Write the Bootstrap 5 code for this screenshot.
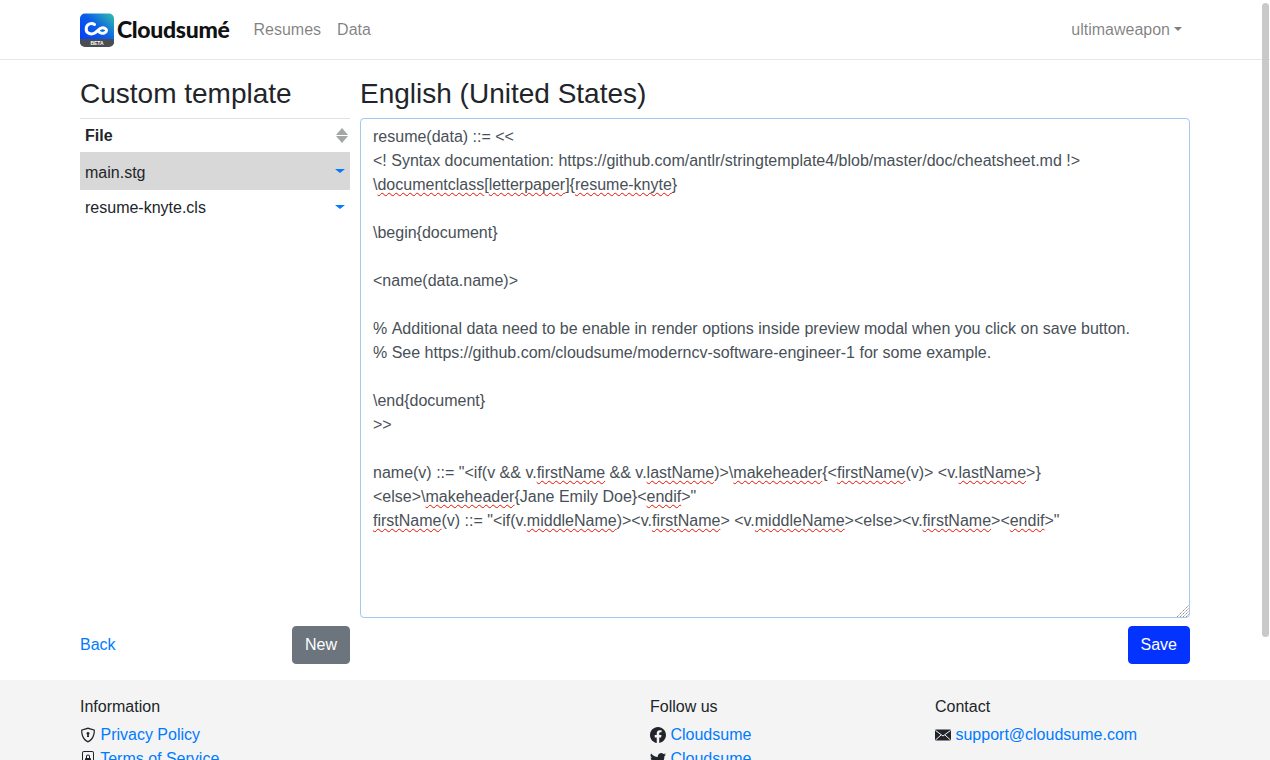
<!DOCTYPE html>
<html lang="en">
<head>
<meta charset="utf-8">
<title>Custom template</title>
<link rel="stylesheet" href="https://cdn.jsdelivr.net/npm/bootstrap@5.3.0/dist/css/bootstrap.min.css">
<style>
html,body{height:760px;overflow:hidden;}
body{font-family:"Liberation Sans",Arial,sans-serif;font-size:16px;color:#212529;background:#fff;}
a{color:#007bff;text-decoration:none;}
.wrap-box{width:1110px;margin:0 auto;}
.top-bar{height:60px;border-bottom:1px solid #e7e7e7;}
.brand-box{gap:3px;margin-right:16px;color:#111;}
.brand-word{font-family:Lato,sans-serif;font-weight:900;font-size:23px;letter-spacing:-.32px;line-height:1;}
.top-link{color:rgba(0,0,0,.5);padding:8px;}
.top-caret{display:inline-block;margin-left:4px;vertical-align:4px;border-top:4.8px solid;border-left:4.8px solid transparent;border-right:4.8px solid transparent;}
.side-col{width:270px;flex:none;}
.main-col{width:830px;flex:none;}
.col-gap{gap:10px;}
.page-title{font-size:28px;font-weight:500;line-height:33.6px;margin:17px 0 7px;color:#212529;}
.file-head{height:34px;border-top:1px solid #dee2e6;padding:0 2px 0 5px;font-weight:700;}
.file-head>span:first-child{padding-top:2px;}
.file-row{padding:0 5px;color:#212529;}
.row-one{height:38px;background:#d8d8d8;}
.row-one>span:first-child{padding-top:4px;}
.row-two>span:first-child{padding-top:2px;}
.row-two{height:34px;}
.row-caret{border-top:4px solid #007bff;border-left:5px solid transparent;border-right:5px solid transparent;}
.sort-up{width:0;border-bottom:7.5px solid #a3a5a7;border-left:6px solid transparent;border-right:6px solid transparent;margin-bottom:1px;}
.sort-down{width:0;border-top:7.5px solid #a3a5a7;border-left:6px solid transparent;border-right:6px solid transparent;}
.code-box{height:500px;border:1px solid #a3c9ef;border-radius:4px;padding:6px 12px;color:#495057;line-height:24px;white-space:pre;position:relative;background:#fff;}
.no-kern{font-kerning:none;}
.sp{text-decoration:underline wavy #e51400;text-decoration-thickness:1px;text-underline-offset:2px;text-decoration-skip-ink:none;}
.grip{position:absolute;right:0;bottom:0;width:13px;height:13px;}
.action-row{margin-top:8px;height:38px;}
.act-btn{height:38px;padding:6px 12px;line-height:24px;border-radius:4px;border:1px solid;color:#fff;font-size:16px;}
.btn-new{background:#6c757d;border-color:#6c757d;}
.btn-save{background:#0433ff;border-color:#0433ff;}
.foot-band{margin-top:16px;background:#f4f4f4;height:300px;padding-top:17px;}
.foot-grid{display:grid;grid-template-columns:570px 285px 255px;}
.foot-head{line-height:20px;margin-bottom:6px;}
.foot-line{line-height:24px;white-space:nowrap;}
.foot-line svg{width:16px;height:16px;vertical-align:-3px;color:#212529;}
.fake-thumb{position:fixed;right:1px;top:3px;width:7px;height:634px;border-radius:4px;background:#c9c9c9;}
</style>
</head>
<body>
<nav class="top-bar">
  <div class="wrap-box h-100 d-flex align-items-center">
    <a href="#" class="brand-box d-flex align-items-center">
      <svg width="34" height="34" viewBox="0 0 34 34">
        <defs><linearGradient id="lg" x1="0" y1="1" x2="1" y2="0"><stop offset="0" stop-color="#0433ff"/><stop offset=".55" stop-color="#0a5ee8"/><stop offset="1" stop-color="#35c0a8"/></linearGradient></defs>
        <rect width="34" height="33" y=".5" rx="5" fill="url(#lg)"/>
        <path d="M0 26h34v3a5 5 0 0 1-5 5H5a5 5 0 0 1-5-5z" fill="#4a4d52"/>
        <text x="17" y="32.3" font-size="5" font-weight="700" fill="#fff" text-anchor="middle" font-family="Liberation Sans">BETA</text>
        <path d="M14.5 11.500C12 9.500 6.500 10.300 6.200 15.500c-.3 5 5 6.500 8.500 4.500 2.500-1.500 4.500-5 7.500-5.200 2-.2 4.500 1 4.300 2.800-.2 2-3 3-5.200 2.500-1.300-.3-2.200-1-3-1.800" fill="none" stroke="#fff" stroke-width="3" stroke-linecap="round"/>
      </svg>
      <span class="brand-word">Cloudsumé</span>
    </a>
    <a href="#" class="top-link">Resumes</a>
    <a href="#" class="top-link">Data</a>
    <a href="#" class="top-link ms-auto">ultimaweapon<span class="top-caret"></span></a>
  </div>
</nav>
<main class="wrap-box d-flex col-gap">
  <div class="side-col">
    <h3 class="page-title">Custom template</h3>
    <div class="file-head d-flex align-items-center justify-content-between"><span>File</span><span class="d-flex flex-column"><span class="sort-up"></span><span class="sort-down"></span></span></div>
    <div class="file-row row-one d-flex align-items-center justify-content-between"><span>main.stg</span><span class="row-caret"></span></div>
    <div class="file-row row-two d-flex align-items-center justify-content-between"><span>resume-knyte.cls</span><span class="row-caret"></span></div>
  </div>
  <div class="main-col">
    <h3 class="page-title">English (United States)</h3>
    <div class="code-box">resume(data) ::= &lt;&lt;
&lt;! Syntax documentation: https://github.com/antlr/stringtemplate4/blob/master/doc/cheatsheet.md !&gt;
\<span class="sp">documentclass</span>[<span class="sp">letterpaper</span>]{<span class="sp">resume-knyte</span>}

\begin{document}

&lt;name(data.name)&gt;

<span class="no-kern">% Additional data need to be enable in render options inside preview modal when you click on save button.</span>
% See https://github.com/cloudsume/moderncv-software-engineer-1 for some example.

\end{document}
&gt;&gt;

name(v) ::= "&lt;if(v &amp;&amp; v.<span class="sp">firstName</span> &amp;&amp; v.<span class="sp">lastName</span>)&gt;\<span class="sp">makeheader</span>{&lt;<span class="sp">firstName</span>(v)&gt; &lt;v.<span class="sp">lastName</span>&gt;}
&lt;else&gt;\<span class="sp">makeheader</span>{Jane Emily Doe}&lt;<span class="sp">endif</span>&gt;"
<span class="sp">firstName</span>(v) ::= "&lt;if(v.<span class="sp">middleName</span>)&gt;&lt;v.<span class="sp">firstName</span>&gt; &lt;v.<span class="sp">middleName</span>&gt;&lt;else&gt;&lt;v.<span class="sp">firstName</span>&gt;&lt;<span class="sp">endif</span>&gt;"<svg class="grip" viewBox="0 0 13 13"><path d="M1 13L13 1M4 13L13 4M7 13L13 7M10 13L13 10" stroke="#8a8a8a" stroke-width="1" stroke-dasharray="1.400 .7" fill="none"/></svg></div>
  </div>
</main>
<div class="wrap-box d-flex col-gap action-row">
  <div class="side-col d-flex justify-content-between align-items-center">
    <a href="#">Back</a>
    <button type="button" class="act-btn btn-new">New</button>
  </div>
  <div class="main-col d-flex justify-content-end">
    <button type="button" class="act-btn btn-save">Save</button>
  </div>
</div>
<footer class="foot-band">
  <div class="wrap-box foot-grid">
    <div>
      <div class="foot-head">Information</div>
      <div class="foot-line"><svg viewBox="0 0 16 16" fill="currentColor"><path d="M8 .6 1.600 2.600c-.3.1-.5.3-.5.6C1 9.200 3.600 13.600 8 15.400c4.400-1.800 7-6.200 6.900-12.200 0-.3-.2-.5-.5-.6zM8 1.900l5.700 1.700c0 5-2.100 8.800-5.700 10.500C4.400 12.400 2.300 8.600 2.300 3.600z"/><path d="M9.500 6.500a1.500 1.500 0 1 0-2.200 1.300l-.4 2.100h2.200l-.4-2.100a1.500 1.500 0 0 0 .8-1.300z"/></svg> <a href="#">Privacy Policy</a></div>
      <div class="foot-line"><svg viewBox="0 0 16 16" fill="currentColor"><path d="M4 0h8a2 2 0 0 1 2 2v12a2 2 0 0 1-2 2H4a2 2 0 0 1-2-2V2a2 2 0 0 1 2-2zm0 1a1 1 0 0 0-1 1v12a1 1 0 0 0 1 1h8a1 1 0 0 0 1-1V2a1 1 0 0 0-1-1z"/><path d="M8 3.500a2 2 0 0 0-2 2V7a1 1 0 0 0-1 1v3a1 1 0 0 0 1 1h4a1 1 0 0 0 1-1V8a1 1 0 0 0-1-1V5.500a2 2 0 0 0-2-2zm0 1a1 1 0 0 1 1 1V7H7V5.500a1 1 0 0 1 1-1z"/></svg> <a href="#">Terms of Service</a></div>
    </div>
    <div>
      <div class="foot-head">Follow us</div>
      <div class="foot-line"><svg viewBox="0 0 16 16" fill="currentColor"><path d="M16 8.049c0-4.446-3.582-8.05-8-8.05C3.58 0-.002 3.603-.002 8.05c0 4.017 2.926 7.347 6.75 7.951v-5.625h-2.03V8.05H6.75V6.275c0-2.017 1.195-3.131 3.022-3.131.876 0 1.791.157 1.791.157v1.98h-1.009c-.993 0-1.303.621-1.303 1.258v1.51h2.218l-.354 2.326H9.25V16c3.824-.604 6.75-3.934 6.75-7.951z"/></svg> <a href="#">Cloudsume</a></div>
      <div class="foot-line"><svg viewBox="0 0 16 16" fill="currentColor"><path d="M5.026 15c6.038 0 9.341-5.003 9.341-9.334 0-.14 0-.282-.006-.422A6.685 6.685 0 0 0 16 3.542a6.658 6.658 0 0 1-1.889.518 3.301 3.301 0 0 0 1.447-1.817 6.533 6.533 0 0 1-2.087.793A3.286 3.286 0 0 0 7.875 6.030a9.325 9.325 0 0 1-6.767-3.429 3.289 3.289 0 0 0 1.018 4.382A3.323 3.323 0 0 1 .640 6.575v.045a3.288 3.288 0 0 0 2.632 3.218 3.203 3.203 0 0 1-.865.115 3.230 3.230 0 0 1-.614-.057 3.283 3.283 0 0 0 3.067 2.277A6.588 6.588 0 0 1 .780 13.580a6.320 6.320 0 0 1-.780-.045A9.344 9.344 0 0 0 5.026 15z"/></svg> <a href="#">Cloudsume</a></div>
    </div>
    <div>
      <div class="foot-head">Contact</div>
      <div class="foot-line"><svg viewBox="0 0 16 16"><rect y="2.500" width="16" height="11" rx="1" fill="#212529"/><path d="M.5 3.500 8 9l7.500-5.500M.5 13l5.500-5M15.500 13 10 8" stroke="#f4f4f4" stroke-width="1" fill="none"/></svg> <a href="#">support@cloudsume.com</a></div>
    </div>
  </div>
</footer>
<div class="fake-thumb"></div>
<script src="https://cdn.jsdelivr.net/npm/bootstrap@5.3.0/dist/js/bootstrap.bundle.min.js"></script>
</body>
</html>
